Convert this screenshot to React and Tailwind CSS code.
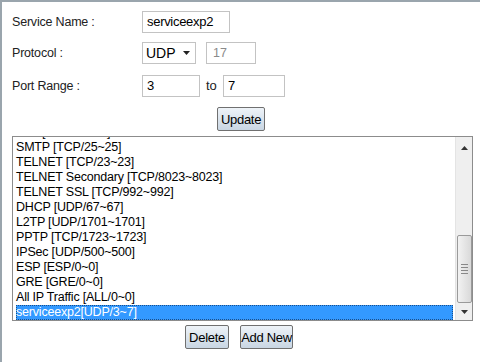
import React from "react";

const services = [
  "FTP [TCP/21~21]",
  "SMTP [TCP/25~25]",
  "TELNET [TCP/23~23]",
  "TELNET Secondary [TCP/8023~8023]",
  "TELNET SSL [TCP/992~992]",
  "DHCP [UDP/67~67]",
  "L2TP [UDP/1701~1701]",
  "PPTP [TCP/1723~1723]",
  "IPSec [UDP/500~500]",
  "ESP [ESP/0~0]",
  "GRE [GRE/0~0]",
  "All IP Traffic [ALL/0~0]",
];

function Btn({ children, className = "" }) {
  return (
    <button
      className={
        "h-[24px] border border-[#707070] rounded-[2px] bg-gradient-to-b from-[#eef3f8] to-[#c9d6e3] text-[13px] text-black leading-none tracking-[-0.3px] " +
        className
      }
    >
      {children}
    </button>
  );
}

export default function App() {
  return (
    <div
      className="w-[480px] h-[362px] bg-white border-t-2 border-l-2 border-[#9aa5ad] overflow-hidden text-[12.5px] text-[#222]"
      style={{ fontFamily: '"Liberation Sans", Arial, sans-serif' }}
    >
      <div className="pl-[10px] pt-[9px]">
        {/* Service Name */}
        <div className="flex items-center h-[22px]">
          <span className="w-[130px] tracking-[-0.2px]">Service Name :</span>
          <div className="w-[88px] h-[22px] border border-[#c3c3c3] flex items-center px-[4px] text-black text-[13px] tracking-[-0.3px]">
            serviceexp2
          </div>
        </div>

        {/* Protocol */}
        <div className="flex items-center h-[22px] mt-[9px]">
          <span className="w-[130px] tracking-[-0.2px]">Protocol :</span>
          <div className="w-[54px] h-[22px] border border-[#c3c3c3] flex items-center justify-between pl-[3px] pr-[5px] text-black text-[14px]">
            <span>UDP</span>
            <svg width="7" height="4" viewBox="0 0 7 4">
              <path d="M0 0h7L3.5 4z" fill="#222" />
            </svg>
          </div>
          <div className="ml-[10px] w-[50px] h-[22px] border border-[#c3c3c3] flex items-center px-[6px] text-[#8a8a8a]">
            17
          </div>
        </div>

        {/* Port Range */}
        <div className="flex items-center h-[22px] mt-[11px]">
          <span className="w-[130px] tracking-[-0.2px]">Port Range :</span>
          <div className="w-[58px] h-[22px] border border-[#c3c3c3] flex items-center px-[4px] text-black text-[13px]">
            3
          </div>
          <span className="ml-[6px] w-[17px] text-[13px]">to</span>
          <div className="w-[62px] h-[22px] border border-[#c3c3c3] flex items-center px-[4px] text-black text-[13px]">
            7
          </div>
        </div>

        {/* Update */}
        <div className="flex mt-[10px] pl-[205px]">
          <Btn className="w-[48px]">Update</Btn>
        </div>

        {/* List box */}
        <div className="mt-[5px] w-[461px] h-[185px] border border-[#8c8c8c] flex overflow-hidden">
          <div className="flex-1 overflow-hidden pl-[3px] pt-[1px]">
            <div className="mt-[-13px]">
              {services.map((s) => (
                <div key={s} className="h-[15px] leading-[15px] whitespace-nowrap text-black tracking-[-0.2px]">
                  {s}
                </div>
              ))}
              <div className="h-[15px] leading-[15px] mr-[2px] bg-[#3399ff] text-white tracking-[-0.2px] outline outline-1 outline-dotted outline-[#1b4f8a] -outline-offset-1">
                serviceexp2[UDP/3~7]
              </div>
            </div>
          </div>
          {/* scrollbar */}
          <div className="w-[17px] bg-[#efefef] border-l border-[#e4e4e4] flex flex-col items-center">
            <div className="h-[17px] flex items-center justify-center mt-[2px]">
              <svg width="7" height="4" viewBox="0 0 7 4">
                <path d="M3.5 0L7 4H0z" fill="#333" />
              </svg>
            </div>
            <div className="flex-1" />
            <div className="w-[15px] h-[68px] border border-[#9a9a9a] rounded-[2px] bg-gradient-to-r from-[#f2f2f2] to-[#d9d9d9] flex flex-col items-center justify-center gap-[2px]">
              <div className="w-[7px] h-px bg-[#888]" />
              <div className="w-[7px] h-px bg-[#888]" />
              <div className="w-[7px] h-px bg-[#888]" />
              <div className="w-[7px] h-px bg-[#888]" />
            </div>
            <div className="h-[17px] flex items-center justify-center">
              <svg width="7" height="4" viewBox="0 0 7 4">
                <path d="M0 0h7L3.5 4z" fill="#333" />
              </svg>
            </div>
          </div>
        </div>

        {/* Delete / Add New */}
        <div className="flex gap-[11px] pl-[173px] mt-[4px]">
          <Btn className="w-[44px]">Delete</Btn>
          <Btn className="w-[53px]">Add New</Btn>
        </div>
      </div>
    </div>
  );
}
